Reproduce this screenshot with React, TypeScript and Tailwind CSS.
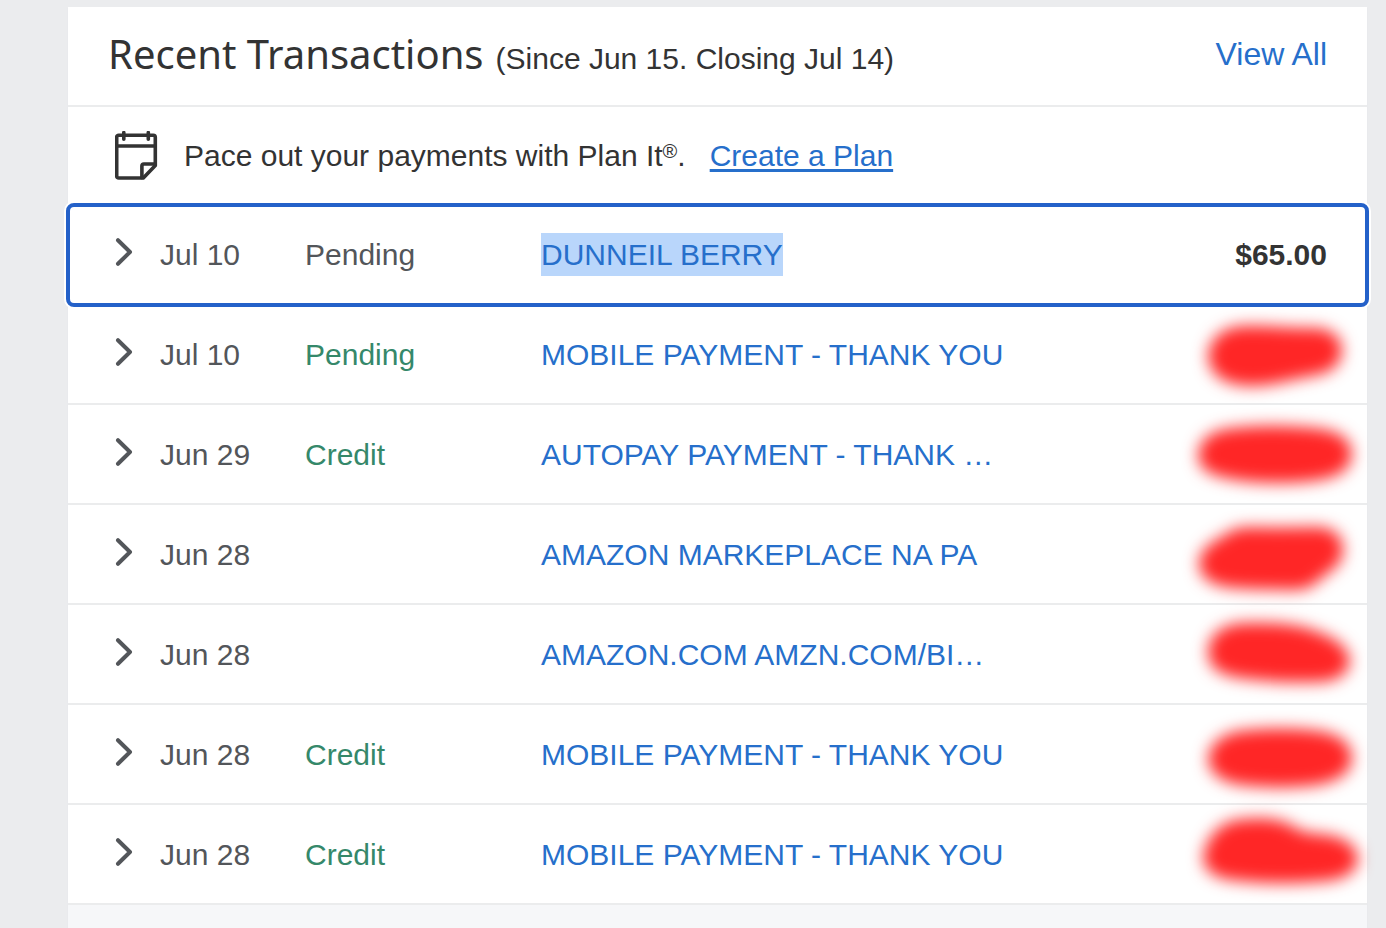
import React from 'react';

type Transaction = {
  date: string;
  status?: string;
  description: string;
  amount?: string;
  mask?: string;
  selected?: boolean;
};

const transactions: Transaction[] = [
  {
    date: 'Jul 10',
    status: 'Pending',
    description: 'DUNNEIL BERRY',
    amount: '$65.00',
    selected: true,
  },
  {
    date: 'Jul 10',
    status: 'Pending',
    description: 'MOBILE PAYMENT - THANK YOU',
    mask: 'M28 52 C29 34 42 24 60 22 C90 21 110 25 135 24 C152 25 160 34 160 46 C159 60 149 67 130 70 C110 73 95 80 72 80 C44 80 30 70 28 52Z',
  },
  {
    date: 'Jun 29',
    status: 'Credit',
    description: 'AUTOPAY PAYMENT - THANK …',
    mask: 'M18 51 C19 34 32 26 52 24 C80 21 115 21 140 25 C160 28 170 36 170 50 C168 65 156 71 138 74 C115 78 80 78 55 74 C32 70 19 66 18 51Z',
  },
  {
    date: 'Jun 28',
    description: 'AMAZON MARKEPLACE NA PA',
    mask: 'M19 58 C20 44 32 38 44 31 C52 25 58 23 70 23 C95 24 115 23 138 23 C154 24 162 34 161 46 C160 60 150 64 140 72 C130 82 124 84 110 84 C90 83 65 84 45 81 C28 78 19 70 19 58Z',
  },
  {
    date: 'Jun 28',
    description: 'AMAZON.COM AMZN.COM/BI…',
    mask: 'M28 46 C29 28 45 20 62 19 C85 18 105 19 122 23 C145 30 166 38 168 56 C167 70 152 76 135 76 C105 77 80 75 58 72 C37 68 28 62 28 46Z',
  },
  {
    date: 'Jun 28',
    status: 'Credit',
    description: 'MOBILE PAYMENT - THANK YOU',
    mask: 'M28 54 C30 35 48 27 68 26 C90 24 115 24 138 27 C156 30 170 38 170 54 C169 69 152 76 136 79 C115 82 85 82 60 79 C41 76 29 69 28 54Z',
  },
  {
    date: 'Jun 28',
    status: 'Credit',
    description: 'MOBILE PAYMENT - THANK YOU',
    mask: 'M23 53 C26 33 38 20 55 16 C75 13 95 14 108 20 C122 30 130 29 148 31 C166 35 176 42 176 55 C175 67 160 74 145 75 C115 78 85 78 60 75 C38 74 24 68 23 53Z',
  },
];

const PlanIcon = () => (
  <svg className="shrink-0" width="44" height="50" viewBox="0 0 44 50" fill="none" stroke="#333" strokeWidth="3.6" strokeLinecap="round" strokeLinejoin="round">
    <path d="M28.3 47H3.7a2 2 0 0 1-2-2V6.2a2 2 0 0 1 2-2h34.6a2 2 0 0 1 2 2V34.5Z" />
    <path d="M1.7 15h38.6M8.8 1.6v6.6M33.3 1.6v6.6" />
    <path d="M40.3 33H28.9a2 2 0 0 0-2 2V46.6" />
  </svg>
);

const Chevron = () => (
  <svg width="18" height="28" viewBox="0 0 18 28" fill="none" stroke="#53565a" strokeWidth="4" strokeLinecap="round" strokeLinejoin="round">
    <path d="M3 2.2 15 14 3 25.8" />
  </svg>
);

const TransactionRow = ({ item }: { item: Transaction }) => (
  <tr className={`relative h-[100px] *:border-b-2 *:border-[#ebeced] *:p-0 ${item.selected ? 'z-10' : ''}`}>
    <td>
      {/* Focus ring */}
      {item.selected && (
        <span className="pointer-events-none absolute -inset-0.5 rounded-lg border-4 border-[#2461c9] ring-2 ring-white" />
      )}
      <button className="ml-[47px] block pb-1" aria-label="Expand">
        <Chevron />
      </button>
    </td>
    <td><div className="pt-0.5">{item.date}</div></td>
    <td className={item.selected ? '' : 'text-[#35886a]'}>
      <div className="pt-0.5">{item.status}</div>
    </td>
    <td>
      <div className="pt-0.5">
        <a href="#" className={`whitespace-nowrap text-[#266fcb] ${item.selected ? 'bg-[#b9d6fb] py-[5px]' : ''}`}>
          {item.description}
        </a>
      </div>
    </td>
    <td className="text-right">
      {item.amount ? (
        <div className="pt-0.5 pr-10 font-bold text-[#333]">{item.amount}</div>
      ) : (
        <svg className="ml-auto overflow-visible blur-[8px]" width="186" height="98" viewBox="0 0 186 98" aria-hidden="true">
          <path d={item.mask} fill="#ff2626" stroke="#ff2626" strokeWidth="2" />
        </svg>
      )}
    </td>
  </tr>
);

const App = () => {
  return (
    <div className="flex min-h-screen flex-col bg-[#ebecee] pt-[7px] pr-[19px] pl-[68px] font-['Liberation_Sans',Arial,sans-serif] text-[30px] leading-9 text-[#53565a]">
      <section className="flex flex-1 flex-col bg-white shadow-[0_1px_1px_#e0e1e3]">
        {/* Header */}
        <header className="flex h-[100px] items-center justify-between border-b-2 border-[#ebeced] px-10 pb-1 text-[#333]">
          <h2 className="flex items-baseline gap-3 whitespace-nowrap">
            <span className="font-['Noto_Sans',sans-serif] text-[40px] leading-[48px]">Recent Transactions</span>
            <span>(Since Jun 15. Closing Jul 14)</span>
          </h2>
          <a href="#" className="text-[32px] text-[#266fcb]">View All</a>
        </header>

        {/* Plan It */}
        <div className="flex h-[98px] items-center pl-[47px] text-[#333]">
          <PlanIcon />
          <p className="ml-[25px] whitespace-nowrap">
            Pace out your payments with Plan It<sup className="relative -top-2 align-baseline text-xl leading-none">®</sup>.
          </p>
          <a href="#" className="ml-6 whitespace-nowrap text-[#266fcb] underline decoration-[3px] underline-offset-[3px]">Create a Plan</a>
        </div>

        <table className="w-full table-fixed border-separate border-spacing-0">
          <colgroup>
            <col className="w-[92px]" />
            <col className="w-[145px]" />
            <col className="w-[236px]" />
            <col />
            <col className="w-[186px]" />
          </colgroup>
          <tbody>
            {transactions.map((item, index) => (
              <TransactionRow key={index} item={item} />
            ))}
          </tbody>
        </table>

        <div className="flex-1 bg-[#f6f7f9]" />
      </section>
    </div>
  );
};

export default App;
